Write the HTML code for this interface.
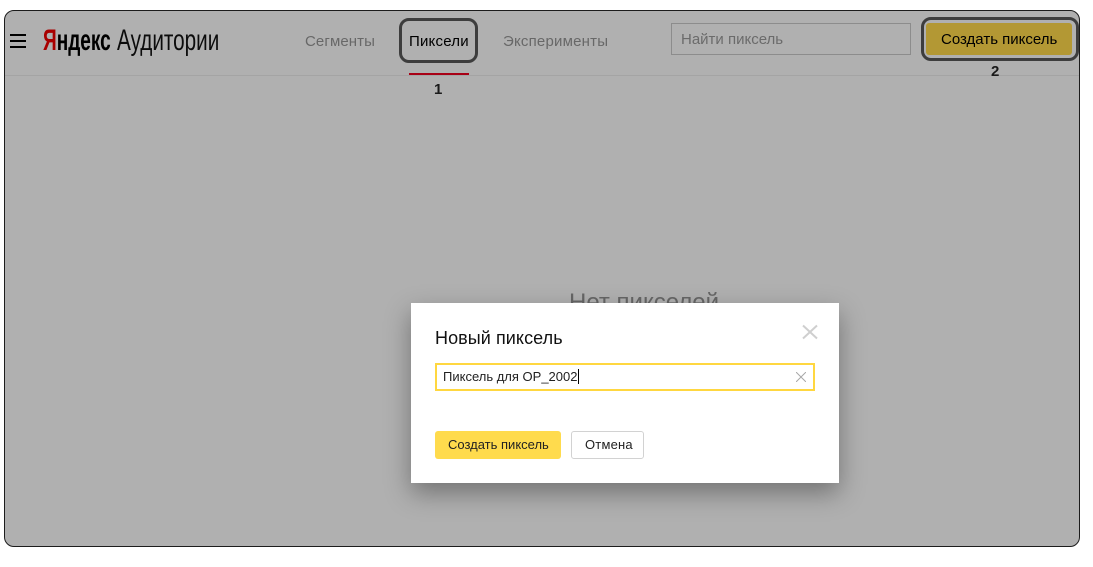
<!DOCTYPE html>
<html lang="ru">
<head>
<meta charset="utf-8">
<style>
html,body{margin:0;padding:0;background:#fff;}
body{width:1093px;height:567px;position:relative;overflow:hidden;font-family:"Liberation Sans","Noto Sans CJK SC",sans-serif;}
.a{position:absolute;white-space:nowrap;}
#frame{left:4px;top:10px;width:1074px;height:535px;border:1px solid #1c1c1c;border-radius:10px;background:#b0b0b0;}
.bar{height:2px;width:16px;left:10px;background:#000;}
.logo{font-size:30px;line-height:34px;top:24px;transform-origin:0 0;}
.nav{font-size:15px;line-height:18px;top:33px;color:#686868;letter-spacing:.1px;}
.box{border:3px solid #3d3d3d;box-sizing:border-box;}
.num{font-size:15px;line-height:16px;font-weight:bold;color:#1a1a1a;}
#modal{left:411px;top:303px;width:428px;height:180px;background:#fff;box-shadow:0 10px 24px rgba(0,0,0,.35);}
</style>
</head>
<body>
<div class="a" id="frame"></div>
<div class="a" style="left:5px;top:75px;width:1074px;height:1px;background:#a4a4a4;"></div>

<div class="a bar" style="top:34px;"></div>
<div class="a bar" style="top:40px;"></div>
<div class="a bar" style="top:46px;"></div>

<div class="a logo" style="left:43px;font-weight:bold;color:#000;transform:scaleX(.635);"><span style="color:#a80000;">Я</span>ндекс</div>
<div class="a logo" style="left:117px;color:#0c0c0c;transform:scaleX(.69);">Аудитории</div>

<div class="a nav" style="left:305px;">Сегменты</div>
<div class="a nav" style="left:409px;color:#000;letter-spacing:.2px;">Пиксели</div>
<div class="a nav" style="left:503px;letter-spacing:.2px;">Эксперименты</div>

<div class="a box" style="left:399px;top:18px;width:79px;height:45px;border-radius:10px;"></div>
<div class="a" style="left:409px;top:73px;width:60px;height:2px;background:#a80015;"></div>
<div class="a num" style="left:434px;top:82px;">1</div>

<div class="a" style="left:671px;top:23px;width:240px;height:32px;border:1px solid #8c8c8c;box-sizing:border-box;"></div>
<div class="a" style="left:681px;top:31px;font-size:15px;line-height:18px;color:#6b6b6b;">Найти пиксель</div>

<div class="a" style="left:926px;top:23px;width:146px;height:32px;background:#b39834;border-radius:3px;"></div>
<div class="a" style="left:941px;top:31px;font-size:15px;line-height:18px;color:#000;">Создать пиксель</div>
<div class="a box" style="left:921px;top:17px;width:158px;height:44px;border-radius:10px;"></div>
<div class="a num" style="left:991px;top:64px;">2</div>

<div class="a" style="left:569px;top:289px;font-size:24px;line-height:28px;color:#666;">Нет пикселей</div>

<div class="a" id="modal"></div>
<div class="a" style="left:435px;top:327px;font-size:18px;line-height:22px;color:#111;letter-spacing:.07px;">Новый пиксель</div>
<svg class="a" style="left:802px;top:324px;" width="16" height="16" viewBox="0 0 16 16"><path d="M1 1.500L15 14.500M15 1.500L1 14.500" stroke="#cfcfcf" stroke-width="2" fill="none"/></svg>

<div class="a" style="left:435px;top:363px;width:380px;height:28px;border:2px solid #ffd740;box-sizing:border-box;background:#fff;"></div>
<div class="a" style="left:443px;top:369px;font-size:13px;line-height:16px;color:#222;">Пиксель для OP_2002</div>
<div class="a" style="left:578px;top:369px;width:1px;height:15px;background:#000;"></div>
<svg class="a" style="left:796px;top:372px;" width="10" height="10" viewBox="0 0 10 10"><path d="M0 0L10 10M10 0L0 10" stroke="#a8a8a8" stroke-width="1" fill="none"/></svg>

<div class="a" style="left:435px;top:431px;width:126px;height:28px;background:#ffdb4d;border-radius:3px;"></div>
<div class="a" style="left:448px;top:437px;font-size:13px;line-height:16px;color:#222;">Создать пиксель</div>
<div class="a" style="left:571px;top:431px;width:73px;height:28px;background:#fff;border:1px solid #d2d2d2;border-radius:3px;box-sizing:border-box;"></div>
<div class="a" style="left:585px;top:437px;font-size:13px;line-height:16px;color:#222;letter-spacing:.2px;">Отмена</div>
</body>
</html>
